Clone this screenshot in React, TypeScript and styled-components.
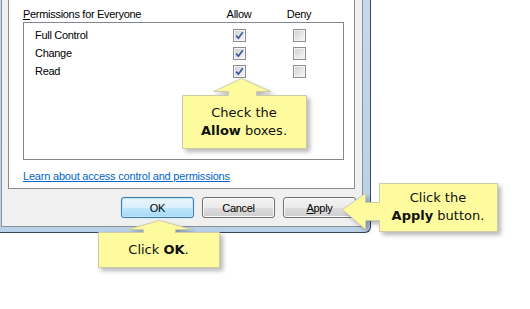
import { ReactNode } from 'react';
import { createGlobalStyle, styled } from 'styled-components';

const GlobalStyle = createGlobalStyle`
  body {
    margin: 0;
    background: #ffffff;
    font-family: "Liberation Sans", Arial, sans-serif;
  }
`;

const Page = styled.div`
  position: relative;
  width: 530px;
  height: 309px;
  overflow: hidden;
  background: #ffffff;
`;

const WindowFrame = styled.div`
  box-sizing: border-box;
  display: flex;
  width: 371px;
  height: 233px;
  padding: 0 7px 5px 1px;
  background: linear-gradient(180deg, #c4d8ee 0%, #b9d0e9 100%);
  border-right: 1px solid #3a4656;
  border-bottom: 1px solid #3a4656;
  border-bottom-right-radius: 6px;
`;

const Client = styled.div`
  box-sizing: border-box;
  display: flex;
  flex-direction: column;
  width: 362px;
  height: 227px;
  padding: 0 6px 8px 6px;
  background: #f0f0f0;
  border: 1px solid #8c9097;
  border-top: none;
  border-bottom-right-radius: 3px;
`;

const Panel = styled.div`
  box-sizing: border-box;
  display: flex;
  flex-direction: column;
  width: 347px;
  padding: 6px 10px 4px 14px;
  background: #ffffff;
  border: 1px solid #898c95;
  border-top: none;
  font-size: 11px;
  letter-spacing: -0.3px;
  color: #000000;
`;

const Columns = styled.div<{ $first: number }>`
  display: grid;
  grid-template-columns: ${(p) => p.$first}px 60px 60px;
  align-items: center;
`;

const HeaderRow = styled(Columns)`
  height: 16px;
`;

const ColTitle = styled.span`
  text-align: center;
`;

const ListBox = styled.div`
  box-sizing: border-box;
  width: 321px;
  height: 138px;
  padding-top: 3px;
  border: 1px solid #828790;
`;

const Row = styled(Columns)`
  height: 18px;
`;

const RowLabel = styled.span`
  padding-left: 11px;
`;

const Cell = styled.div`
  display: flex;
  justify-content: center;
`;

const Box = styled.span`
  box-sizing: border-box;
  display: flex;
  width: 13px;
  height: 13px;
  padding: 1px;
  border: 1px solid #8e8f8f;
  background: #f4f4f4;
`;

const BoxInner = styled.span`
  display: flex;
  align-items: center;
  justify-content: center;
  flex: 1;
  background: linear-gradient(135deg, #cfd2d6 0%, #e4e5e7 55%, #f6f6f6 100%);
`;

const HelpLink = styled.a`
  margin-top: 8px;
  line-height: 16px;
  color: #0066cc;
  text-decoration: underline;
  letter-spacing: -0.2px;
`;

const ButtonRow = styled.div`
  display: flex;
  justify-content: flex-end;
  gap: 8px;
  margin-top: 8px;
`;

const Button = styled.button<{ $default?: boolean }>`
  box-sizing: border-box;
  width: 73px;
  height: 21px;
  padding: 0;
  font-family: "Liberation Sans", Arial, sans-serif;
  font-size: 11px;
  letter-spacing: -0.3px;
  color: #000000;
  border-radius: 3px;
  border: 1px solid ${(p) => (p.$default ? '#3c7fb1' : '#707070')};
  background: ${(p) =>
    p.$default
      ? 'linear-gradient(180deg, #eaf6fd 0%, #d9f0fc 50%, #bee6fd 51%, #a7d9f5 100%)'
      : 'linear-gradient(180deg, #f2f2f2 0%, #ebebeb 50%, #dddddd 51%, #cfcfcf 100%)'};
  box-shadow: ${(p) =>
    p.$default ? 'inset 0 0 0 1px #bfe4f8, 0 0 1px #5ab6ea' : 'inset 0 0 0 1px #fafafa'};
`;

const Key = styled.span`
  text-decoration: underline;
`;

const CalloutBox = styled.div<{ $x: number; $y: number; $w: number; $h: number }>`
  position: absolute;
  left: ${(p) => p.$x}px;
  top: ${(p) => p.$y}px;
  width: ${(p) => p.$w}px;
  height: ${(p) => p.$h}px;
  display: flex;
  align-items: center;
  justify-content: center;
`;

const CalloutShape = styled.svg`
  position: absolute;
  left: 0;
  top: 0;
  width: 100%;
  height: 100%;
  overflow: visible;
  filter: drop-shadow(3px 3px 2px rgba(0, 0, 0, 0.28));
`;

const CalloutText = styled.div`
  position: relative;
  font-family: "DejaVu Sans", Verdana, sans-serif;
  font-size: 13px;
  line-height: 18px;
  text-align: center;
  color: #111111;
  b {
    font-weight: bold;
  }
`;

interface CalloutProps {
  x: number;
  y: number;
  w: number;
  h: number;
  points: string;
  children: ReactNode;
}

const Callout = ({ x, y, w, h, points, children }: CalloutProps) => (
  <CalloutBox $x={x} $y={y} $w={w} $h={h}>
    <CalloutShape viewBox={`0 0 ${w} ${h}`}>
      <polygon
        points={points}
        fill="#fdfb9e"
        stroke="#cdcba6"
        strokeWidth="1"
        transform="translate(0.5 0.5)"
      />
    </CalloutShape>
    <CalloutText>{children}</CalloutText>
  </CalloutBox>
);

const Check = ({ checked }: { checked: boolean }) => (
  <Box>
    <BoxInner>
      {checked && (
        <svg width="9" height="9" viewBox="0 0 9 9">
          <path d="M1.2 4.6 L3.4 7.2 L7.8 1.2" fill="none" stroke="#3d57a0" strokeWidth="1.7" />
        </svg>
      )}
    </BoxInner>
  </Box>
);

const permissions = ['Full Control', 'Change', 'Read'];

const App = () => {
  return (
    <Page>
      <GlobalStyle />
      <WindowFrame>
        <Client>
          <Panel>
            <HeaderRow $first={186}>
              <span>
                <Key>P</Key>ermissions for Everyone
              </span>
              <ColTitle>Allow</ColTitle>
              <ColTitle>Deny</ColTitle>
            </HeaderRow>
            <ListBox>
              {permissions.map((name) => (
                <Row $first={185} key={name}>
                  <RowLabel>{name}</RowLabel>
                  <Cell>
                    <Check checked={true} />
                  </Cell>
                  <Cell>
                    <Check checked={false} />
                  </Cell>
                </Row>
              ))}
            </ListBox>
            <HelpLink>Learn about access control and permissions</HelpLink>
          </Panel>
          <ButtonRow>
            <Button $default>OK</Button>
            <Button>Cancel</Button>
            <Button>
              <Key>A</Key>pply
            </Button>
          </ButtonRow>
        </Client>
      </WindowFrame>

      <Callout
        x={182}
        y={95}
        w={124}
        h={53}
        points="0,0 46,0 46,-4 31,-4 59,-17 88,-4 74,-4 74,0 124,0 124,53 0,53"
      >
        Check the
        <br />
        <b>Allow</b> boxes.
      </Callout>

      <Callout
        x={98}
        y={232}
        w={121}
        h={35}
        points="0,0 45,0 45,-3 29,-3 61,-12 93,-3 77,-3 77,0 121,0 121,35 0,35"
      >
        Click <b>OK</b>.
      </Callout>

      <Callout
        x={379}
        y={183}
        w={118}
        h={48}
        points="0,0 118,0 118,48 0,48 0,37 -14,37 -14,46 -37,26 -14,10 -14,19 0,19"
      >
        Click the
        <br />
        <b>Apply</b> button.
      </Callout>
    </Page>
  );
};

export default App;
